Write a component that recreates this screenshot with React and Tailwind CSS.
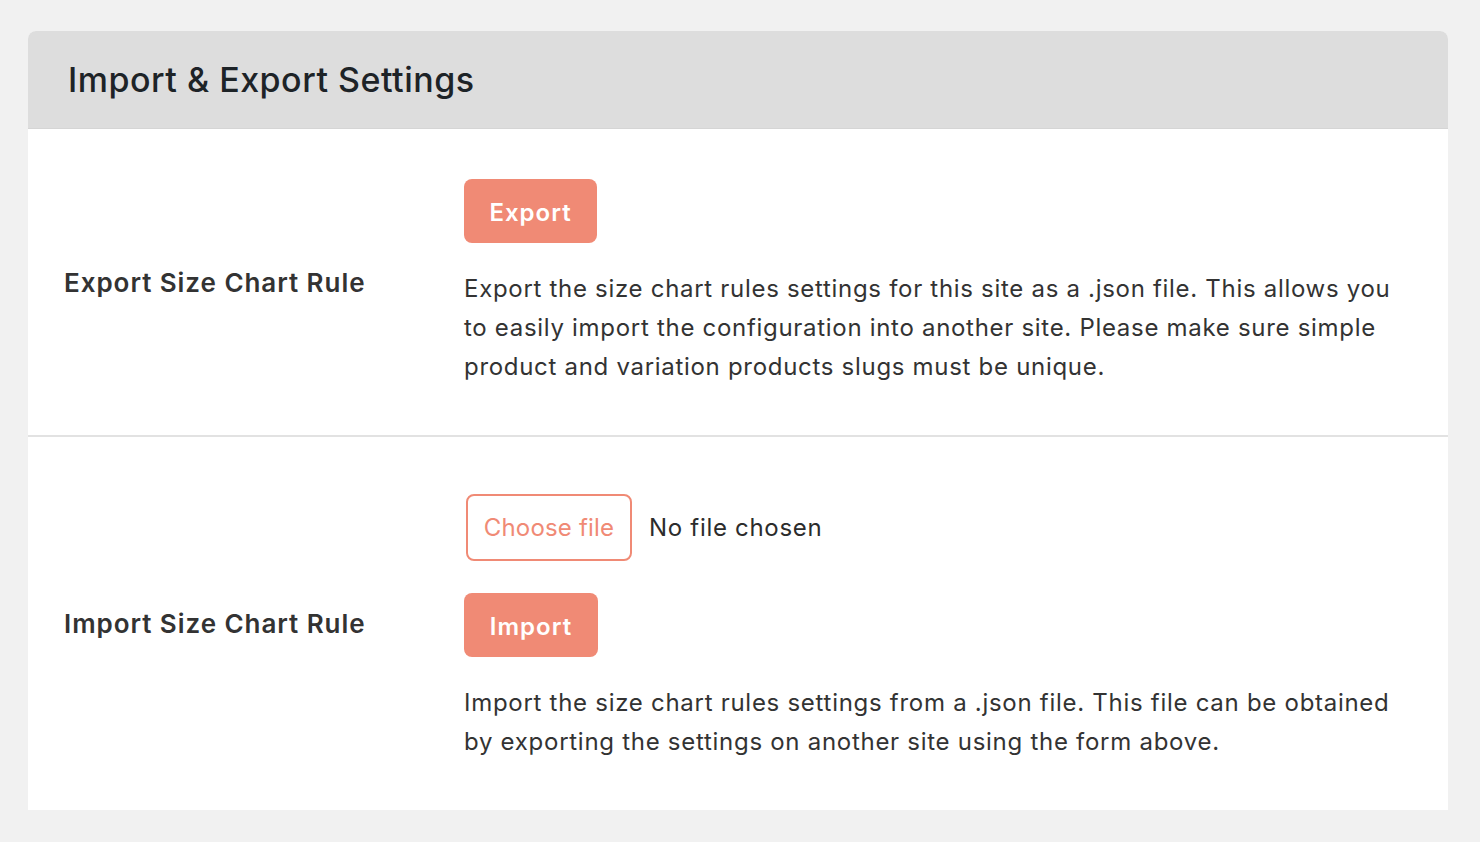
export default function App() {
  const font = { fontFamily: 'Inter, "Noto Sans", sans-serif' };
  return (
    <div className="min-h-[842px] w-full bg-[#f1f1f1] pt-[31px] px-[28px]" style={font}>
      <div className="w-[1420px] bg-white rounded-t-[8px]">
        <div className="h-[98px] bg-[#dddddd] rounded-t-[8px] border-b border-[#d5d5d5] flex items-center pl-[40px]">
          <h1 className="text-[34px] font-medium text-[#1d2327] tracking-[0.5px] leading-none">Import &amp; Export Settings</h1>
        </div>
        <div className="flex items-center border-b-2 border-[#e2e2e2]">
          <div className="w-[436px] shrink-0 pl-[36px] text-[26px] font-semibold text-[#333333] tracking-[0.95px]">Export Size Chart Rule</div>
          <div className="flex-1 pr-[40px] pt-[50px] pb-[49px]">
            <button className="h-[64px] w-[133px] rounded-[8px] bg-[#f08a75] text-white text-[24px] font-semibold tracking-[1px] pt-[3px]">Export</button>
            <p className="mt-[26px] text-[24px] leading-[39px] text-[#333333] tracking-[0.7px]">
              Export the size chart rules settings for this site as a .json file. This allows you to easily import the configuration into another site. Please make sure simple product and variation products slugs must be unique.
            </p>
          </div>
        </div>
        <div className="flex items-center">
          <div className="w-[436px] shrink-0 pl-[36px] text-[26px] font-semibold text-[#333333] tracking-[0.95px]">Import Size Chart Rule</div>
          <div className="flex-1 pr-[40px] pt-[57px] pb-[49px]">
            <div className="flex items-center">
              <div className="ml-[2px] h-[67px] w-[166px] rounded-[8px] border-2 border-[#f08a75] text-[#f08a75] text-[24px] tracking-[0.2px] flex items-center justify-center">Choose file</div>
              <span className="ml-[17px] text-[24px] text-[#2c2c2c] tracking-[0.7px]">No file chosen</span>
            </div>
            <button className="mt-[32px] h-[64px] w-[134px] rounded-[8px] bg-[#f08a75] text-white text-[24px] font-semibold tracking-[1px] pt-[3px]">Import</button>
            <p className="mt-[26px] text-[24px] leading-[39px] text-[#333333] tracking-[0.72px]">
              Import the size chart rules settings from a .json file. This file can be obtained by exporting the settings on another site using the form above.
            </p>
          </div>
        </div>
      </div>
    </div>
  );
}
